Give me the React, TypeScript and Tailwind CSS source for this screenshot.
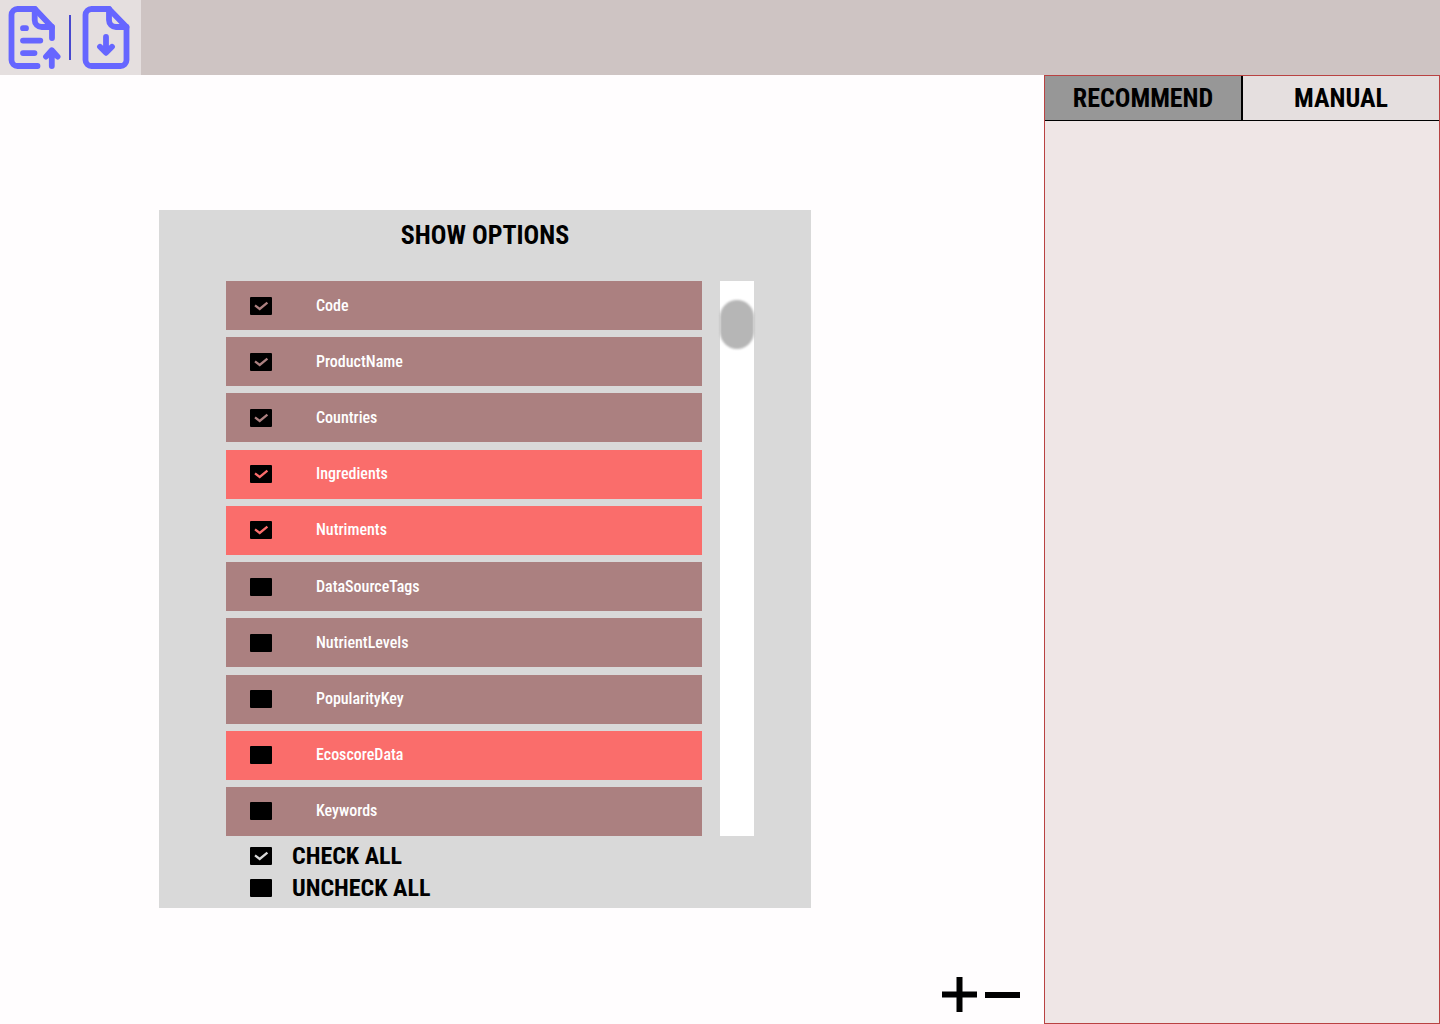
import { useState } from "react";

type Option = { name: string; checked: boolean; highlighted: boolean };

const initialOptions: Option[] = [
  { name: "Code", checked: true, highlighted: false },
  { name: "ProductName", checked: true, highlighted: false },
  { name: "Countries", checked: true, highlighted: false },
  { name: "Ingredients", checked: true, highlighted: true },
  { name: "Nutriments", checked: true, highlighted: true },
  { name: "DataSourceTags", checked: false, highlighted: false },
  { name: "NutrientLevels", checked: false, highlighted: false },
  { name: "PopularityKey", checked: false, highlighted: false },
  { name: "EcoscoreData", checked: false, highlighted: true },
  { name: "Keywords", checked: false, highlighted: false },
];

function UploadIcon() {
  return (
    <svg width="54" height="64" viewBox="8 5 54 64" fill="none" stroke="#6666ff" strokeWidth="5.8" strokeLinecap="round" strokeLinejoin="round" aria-hidden="true">
      <path d="M37.5 66H17.5a6 6 0 0 1-6-6V15a6 6 0 0 1 6-6H35l17 18v11" />
      <path d="M34.7 9v11a7 7 0 0 0 7 7H52" />
      <path d="M23 28.2h3M23 40.6h17.3M23 53.1h11.5" />
      <path d="M51.8 66V52M46 56.6l5.8-6.4 5.8 6.4" />
    </svg>
  );
}

function DownloadIcon() {
  return (
    <svg width="48" height="64" viewBox="82 5 48 64" fill="none" stroke="#6666ff" strokeWidth="5.8" strokeLinecap="round" strokeLinejoin="round" aria-hidden="true">
      <path d="M109 9H91.5a6 6 0 0 0-6 6v45a6 6 0 0 0 6 6h29a6 6 0 0 0 6-6V27z" />
      <path d="M109 9v11a7 7 0 0 0 7 7h10.5" />
      <path d="M106 37v14M100 46.8l6 6 6-6" />
    </svg>
  );
}

function CheckBox({ id, checked, onChange, tick }: { id: string; checked: boolean; onChange: () => void; tick: string }) {
  return (
    <span className="relative h-[18px] w-[22px] shrink-0">
      <input
        id={id}
        type="checkbox"
        checked={checked}
        onChange={onChange}
        className="block h-full w-full appearance-none rounded-[1px] bg-black"
      />
      {checked && (
        <svg className={`pointer-events-none absolute inset-0 ${tick}`} viewBox="0 0 22 18" fill="none" stroke="currentColor" strokeWidth="2.3" aria-hidden="true">
          <path d="M5 8.4l4.7 3.6 7.7-6.4" />
        </svg>
      )}
    </span>
  );
}

export default function App() {
  const [options, setOptions] = useState(initialOptions);
  const [tab, setTab] = useState("RECOMMEND");

  const toggle = (name: string) =>
    setOptions(options.map((o) => (o.name === name ? { ...o, checked: !o.checked } : o)));
  const setAll = (checked: boolean) => setOptions(options.map((o) => ({ ...o, checked })));

  return (
    <div className="flex min-h-screen flex-col bg-[#fffdfe] font-['Roboto_Condensed','Liberation_Sans_Narrow',sans-serif] text-black">
      <header className="flex h-[75px] bg-[#cec4c3]">
        <div className="flex w-[141px] items-center bg-[#e5dfdf] pb-px pl-2">
          <button type="button" aria-label="Upload file">
            <UploadIcon />
          </button>
          <span className="mx-[7px] h-[45px] w-0.5 bg-[#4848cf]" />
          <button type="button" aria-label="Download file" className="ml-1">
            <DownloadIcon />
          </button>
        </div>
      </header>

      <div className="flex flex-1">
        <main className="flex flex-1 flex-col">
          <section className="mt-[135px] mr-[233px] ml-[159px] bg-[#d9d9d9] pt-[5px] pb-1">
            <h1 className="text-center text-[26px] leading-10 font-bold">SHOW OPTIONS</h1>

            <div className="mt-[26px] mr-[57px] ml-[67px] flex h-[555px] gap-[18px]">
              <ul className="flex flex-1 flex-col justify-between">
                {options.map((o) => (
                  <li
                    key={o.name}
                    className={`flex h-[49px] items-center gap-11 pl-6 ${o.highlighted ? "bg-[#fa6d6b]" : "bg-[#ab8080]"}`}
                  >
                    <CheckBox
                      id={o.name}
                      checked={o.checked}
                      onChange={() => toggle(o.name)}
                      tick={o.highlighted ? "text-[#fa6d6b]" : "text-[#ab8080]"}
                    />
                    <label htmlFor={o.name} className="text-base font-medium text-white">
                      {o.name}
                    </label>
                  </li>
                ))}
              </ul>
              <div className="w-[34px] bg-white pt-[19px]">
                <div className="h-[49px] rounded-full bg-[#b6b6b6] blur-[1px]" />
              </div>
            </div>

            <div className="mt-1 ml-[91px] text-2xl leading-8 font-bold">
              <div className="flex items-center gap-5">
                <CheckBox id="check-all" checked onChange={() => setAll(true)} tick="text-[#d9d9d9]" />
                <label htmlFor="check-all">CHECK ALL</label>
              </div>
              <div className="flex items-center gap-5">
                <CheckBox id="uncheck-all" checked={false} onChange={() => setAll(false)} tick="text-[#d9d9d9]" />
                <label htmlFor="uncheck-all">UNCHECK ALL</label>
              </div>
            </div>
          </section>

          <div className="mt-auto mr-6 mb-3 flex gap-2 self-end">
            <button type="button" aria-label="Zoom in">
              <svg width="35" height="35" viewBox="0 0 35 35" aria-hidden="true">
                <path d="M14.5 0h6v14.5H35v6H20.5V35h-6V20.5H0v-6h14.5z" />
              </svg>
            </button>
            <button type="button" aria-label="Zoom out">
              <svg width="35" height="35" viewBox="0 0 35 35" aria-hidden="true">
                <path d="M0 15h35v6H0z" />
              </svg>
            </button>
          </div>
        </main>

        <aside className="w-[27.5%] border border-[#b94242] bg-[#efe6e6]">
          <div className="flex h-[45px] border-b border-black">
            {["RECOMMEND", "MANUAL"].map((name) => (
              <button
                key={name}
                type="button"
                onClick={() => setTab(name)}
                className={`flex-1 text-[26px] leading-8 font-bold first:border-r-2 first:border-black ${tab === name ? "bg-[#979797]" : "bg-[#e5dfdf]"}`}
              >
                {name}
              </button>
            ))}
          </div>
        </aside>
      </div>
    </div>
  );
}
